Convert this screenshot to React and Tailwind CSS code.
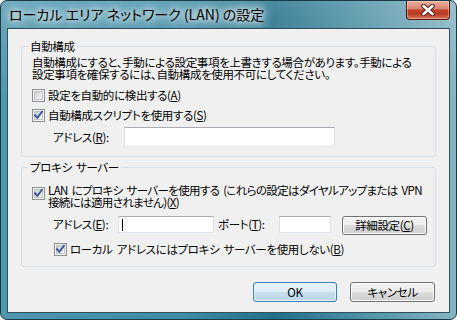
import React from "react";

function Check({ checked }) {
  return (
    <span className="flex h-[13px] w-[13px] shrink-0 items-center justify-center border border-[#8e8f8f] bg-[#f6f6f6]">
      <span className="flex h-[9px] w-[9px] items-center justify-center border border-[#bfc3c8] bg-[linear-gradient(135deg,#c9ccd1_0%,#e4e6e8_60%,#f6f6f6_100%)]">
        {checked && (
          <svg width="9" height="9" viewBox="0 0 9 9" className="overflow-visible">
            <path d="M1 4.2 L3.4 6.8 L8 0.8" fill="none" stroke="#3a54a0" strokeWidth="1.9" strokeLinecap="square" />
          </svg>
        )}
      </span>
    </span>
  );
}

function Input({ className, children }) {
  return (
    <div className={"flex items-center border border-t-[#abadb3] border-l-[#dbdfe6] border-r-[#dbdfe6] border-b-[#e3e9ef] bg-white " + className}>
      {children}
    </div>
  );
}

function Btn({ children, isDefault, className }) {
  return (
    <div
      className={
        isDefault
          ? "flex items-center justify-center rounded-[3px] border border-[#3c7fb1] bg-[linear-gradient(180deg,#eaf4fa_0%,#dcecf5_50%,#c8e0ee_50%,#b9d6e8_100%)] shadow-[inset_0_0_0_1px_#e9f5fc] " + className
          : "flex items-center justify-center rounded-[3px] border border-[#707070] bg-[linear-gradient(180deg,#f2f2f2_0%,#ebebeb_50%,#dddddd_50%,#cfcfcf_100%)] shadow-[inset_0_0_0_1px_#fcfcfc] " + className
      }
    >
      {children}
    </div>
  );
}

export default function App() {
  return (
    <div className="h-[320px] w-[457px] bg-[#f0f0f0] font-['Noto_Sans_CJK_JP',sans-serif] text-black [font-feature-settings:'palt']">
      <div className="flex h-full w-full flex-col rounded-[7px] border border-[#1a3a48] bg-[linear-gradient(180deg,rgba(255,255,255,0.18)_0%,rgba(255,255,255,0)_30%),linear-gradient(90deg,#4f97ad_0%,#3f8ca6_40%,#226f88_60%,#4b8ea3_78%,#86b4c2_100%)] px-[6px] pb-[6px]">
        {/* title bar */}
        <div className="flex h-[27px] items-start">
          <div className="mt-[4px] pl-[2px] text-[14px] leading-[18px] text-black [text-shadow:0_0_6px_#fff,0_0_10px_#fff,0_0_14px_#dbeef4]">
            ローカル エリア ネットワーク (LAN) の設定
          </div>
          <div className="ml-auto flex h-[19px] w-[44px] items-center justify-center rounded-b-[4px] border border-t-0 border-[#4d1d14] bg-[linear-gradient(180deg,#eab0a0_0%,#d98673_42%,#c2432a_50%,#b83b22_70%,#d8745a_100%)] shadow-[inset_0_0_0_1px_rgba(255,220,210,0.45)]">
            <svg width="16" height="12" viewBox="0 0 16 12">
              <path d="M3.5 2 L12.5 10 M12.5 2 L3.5 10" stroke="#4a1e16" strokeWidth="4.6" strokeLinecap="round" />
              <path d="M3.5 2 L12.5 10 M12.5 2 L3.5 10" stroke="#ffffff" strokeWidth="2.6" strokeLinecap="round" />
            </svg>
          </div>
        </div>

        {/* client */}
        <div className="flex flex-1 flex-col border border-[#2f5060] bg-[#f0f0f0] text-[11.5px] tracking-[-0.35px]">
          {/* group 1 */}
          <fieldset className="mx-[13px] mt-[10px] min-w-0 rounded-[3px] border border-[#d5dfe5] p-0">
            <legend className="ml-[6px] px-[2px] leading-[14px]">自動構成</legend>
            <div className="pb-[9px] pl-[10px] pt-[3px]">
              <div className="flex flex-col whitespace-nowrap leading-[12px]">
                <div>自動構成にすると、手動による設定事項を上書きする場合があります。手動による</div>
                <div>設定事項を確保するには、自動構成を使用不可にしてください。</div>
              </div>
              <div className="mt-[8px] flex h-[15px] items-center gap-[3px]">
                <Check />
                <span className="leading-[15px]">
                  設定を自動的に検出する(<u className="underline-offset-1">A</u>)
                </span>
              </div>
              <div className="mt-[5px] flex h-[15px] items-center gap-[3px]">
                <Check checked />
                <span className="leading-[15px]">
                  自動構成スクリプトを使用する(<u className="underline-offset-1">S</u>)
                </span>
              </div>
              <div className="mt-[4px] flex items-center pl-[21px]">
                <span className="w-[71px] leading-[15px]">
                  アドレス(<u className="underline-offset-1">R</u>):
                </span>
                <Input className="h-[20px] w-[211px]" />
              </div>
            </div>
          </fieldset>

          {/* group 2 */}
          <fieldset className="mx-[13px] mt-[3px] min-w-0 rounded-[3px] border border-[#d5dfe5] p-0">
            <legend className="ml-[6px] px-[2px] leading-[14px] [word-spacing:2px]">プロキシ サーバー</legend>
            <div className="pb-[9px] pl-[10px] pt-[10px]">
              <div className="flex items-start gap-[3px]">
                <span className="mt-[3px]">
                  <Check checked />
                </span>
                <div className="flex flex-col whitespace-nowrap leading-[12px] tracking-[-0.65px] [word-spacing:2px]">
                  <div>LAN にプロキシ サーバーを使用する (これらの設定はダイヤルアップまたは VPN</div>
                  <div>
                    接続には適用されません)(<u className="underline-offset-1">X</u>)
                  </div>
                </div>
              </div>
              <div className="mt-[8px] flex items-start pl-[21px]">
                <span className="w-[65px] leading-[17px]">
                  アドレス(<u className="underline-offset-1">E</u>):
                </span>
                <Input className="h-[17px] w-[96px]">
                  <span className="ml-[3px] h-[12px] w-px bg-black" />
                </Input>
                <span className="ml-[4px] w-[61px] leading-[17px]">
                  ポート(<u className="underline-offset-1">T</u>):
                </span>
                <Input className="h-[17px] w-[52px]" />
                <Btn className="ml-[11px] h-[19px] w-[85px] leading-[17px]">
                  詳細設定(<u className="underline-offset-1">C</u>)
                </Btn>
              </div>
              <div className="mt-[7px] flex h-[15px] items-center gap-[3px] pl-[22px]">
                <Check checked />
                <span className="leading-[15px] [word-spacing:2px]">
                  ローカル アドレスにはプロキシ サーバーを使用しない(<u className="underline-offset-1">B</u>)
                </span>
              </div>
            </div>
          </fieldset>

          {/* buttons */}
          <div className="mt-[15px] flex justify-end gap-[13px] pr-[14px]">
            <Btn isDefault className="h-[20px] w-[84px] leading-[18px]">
              OK
            </Btn>
            <Btn className="h-[20px] w-[85px] leading-[18px]">キャンセル</Btn>
          </div>
        </div>
      </div>
    </div>
  );
}
